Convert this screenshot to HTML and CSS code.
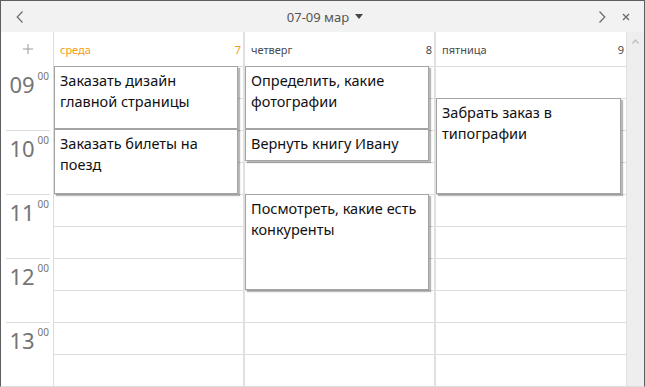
FILE: index.html
```html
<!DOCTYPE html>
<html>
<head>
  <meta charset="UTF-8">
  <title>Календарь</title>
  <link rel="stylesheet" href="styles.css">
</head>
<body>
  <div class="window">
    <div class="titlebar">
      <div class="tb-left">
        <button class="icon-btn" title="Назад">
          <svg width="8" height="12" viewBox="0 0 8 12"><path d="M6.5 0.5 L1.2 6 L6.5 11.5" fill="none" stroke="#6a6a6a" stroke-width="1.2"/></svg>
        </button>
      </div>
      <div class="tb-title">
        <span>07-09 мар</span>
        <svg width="8" height="5" viewBox="0 0 8 5"><polygon points="0,0 8,0 4,5" fill="#454545"/></svg>
      </div>
      <div class="tb-right">
        <button class="icon-btn" title="Вперёд">
          <svg width="8" height="12" viewBox="0 0 8 12"><path d="M1.5 0.5 L6.8 6 L1.5 11.5" fill="none" stroke="#6a6a6a" stroke-width="1.2"/></svg>
        </button>
        <button class="icon-btn" title="Закрыть">
          <svg width="8" height="8" viewBox="0 0 8 8"><path d="M1 1 L7 7 M7 1 L1 7" fill="none" stroke="#6a6a6a" stroke-width="1.3"/></svg>
        </button>
      </div>
    </div>

    <div class="calendar">
      <div class="timecol">
        <div class="head add">
          <svg width="10" height="10" viewBox="0 0 10 10"><path d="M5 0 V10 M0 5 H10" stroke="#9a9a9a" stroke-width="1"/></svg>
        </div>
        <div class="hours">
          <div class="hour"><span class="h">09</span><span class="m">00</span></div>
          <div class="hour"><span class="h">10</span><span class="m">00</span></div>
          <div class="hour"><span class="h">11</span><span class="m">00</span></div>
          <div class="hour"><span class="h">12</span><span class="m">00</span></div>
          <div class="hour"><span class="h">13</span><span class="m">00</span></div>
        </div>
      </div>

      <div class="day today">
        <div class="head"><span>среда</span><span>7</span></div>
        <div class="slots">
          <div class="event" style="top:0;height:63px">Заказать дизайн главной страницы</div>
          <div class="event" style="top:63px;height:65px">Заказать билеты на поезд</div>
        </div>
      </div>

      <div class="day">
        <div class="head"><span>четверг</span><span>8</span></div>
        <div class="slots">
          <div class="event" style="top:0;height:63px">Определить, какие фотографии</div>
          <div class="event" style="top:63px;height:32px">Вернуть книгу Ивану</div>
          <div class="event" style="top:128px;height:96px">Посмотреть, какие есть конкуренты</div>
        </div>
      </div>

      <div class="day last">
        <div class="head"><span>пятница</span><span>9</span></div>
        <div class="slots">
          <div class="event" style="top:32px;height:96px">Забрать заказ в типографии</div>
        </div>
      </div>

      <div class="scrollbar">
        <svg width="7" height="5" viewBox="0 0 7 5"><path d="M0.5 4.5 L3.5 1 L6.5 4.5" fill="none" stroke="#bdbdbd" stroke-width="1.2"/></svg>
      </div>
    </div>
  </div>
</body>
</html>
```

FILE: styles.css
```css
* {
  margin: 0;
  padding: 0;
  box-sizing: border-box;
}

body {
  font-family: "Noto Sans", "Open Sans", sans-serif;
  background: #fff;
}

.window {
  width: 645px;
  height: 387px;
  border: 1px solid #5e5e5e;
  border-bottom-color: #dcdcdc;
  display: flex;
  flex-direction: column;
  background: #fff;
}

.icon-btn {
  background: none;
  border: none;
  cursor: pointer;
  display: flex;
  align-items: center;
}

/* Title bar */
.titlebar {
  height: 31px;
  background: #f2f2f2;
  display: grid;
  grid-template-columns: 1fr auto 1fr;
  align-items: center;
}

.tb-left {
  display: flex;
  padding-left: 15px;
}

.tb-title {
  display: flex;
  align-items: center;
  gap: 6px;
  padding-left: 5px;
  font-size: 13px;
  color: #555;
}

.tb-right {
  display: flex;
  justify-content: flex-end;
  align-items: center;
  gap: 16px;
  padding-right: 14px;
}

/* Calendar grid */
.calendar {
  flex: 1;
  display: flex;
}

.head {
  height: 34px;
  display: flex;
  align-items: center;
}

.timecol {
  width: 53px;
  border-right: 1px solid #dcdcdc;
}

.head.add {
  justify-content: center;
  padding-left: 2px;
}

.hour {
  height: 64px;
  margin: 0 3px 0 5px;
  border-top: 1px solid #dcdcdc;
  display: flex;
  justify-content: flex-end;
  align-items: flex-start;
  gap: 3px;
  padding-right: 1px;
  color: #747474;
}

.hour:first-child {
  border-top-color: transparent;
}

.hour .h {
  font-size: 22px;
  line-height: 22px;
  margin-top: 6px;
}

.hour .m {
  font-size: 10px;
  line-height: 10px;
  margin-top: 4px;
}

.day {
  width: 191px;
  border-right: 2px solid #e0e0e0;
  display: flex;
  flex-direction: column;
}

.day.last {
  border-right-width: 1px;
}

.day .head {
  justify-content: space-between;
  padding: 0 2px 0 6px;
  font-size: 11px;
  color: #4a4a4a;
}

.day.today .head {
  color: #f29c14;
}

.slots {
  flex: 1;
  position: relative;
  background: repeating-linear-gradient(to bottom, #dcdcdc 0, #dcdcdc 1px, transparent 1px, transparent 32px);
}

.event {
  position: absolute;
  left: 0;
  width: calc(100% - 5px);
  background: #fff;
  border: 1px solid #a4a4a4;
  box-shadow: 2px 2px 1px rgba(0, 0, 0, 0.28);
  padding: 3px 5px;
  font-size: 14.5px;
  line-height: 21px;
  color: #111;
  overflow: hidden;
}

.scrollbar {
  width: 17px;
  background: #eeeeee;
  display: flex;
  justify-content: center;
  align-items: flex-start;
  padding-top: 7px;
}
```
